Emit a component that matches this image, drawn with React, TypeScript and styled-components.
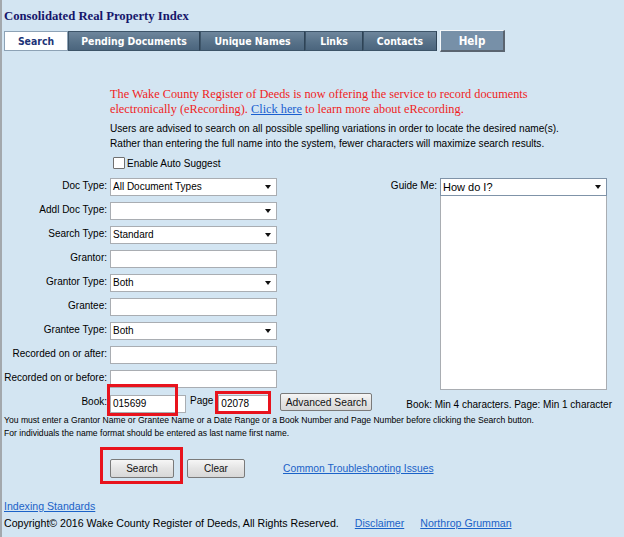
import styled, { createGlobalStyle } from "styled-components";

const GlobalStyle = createGlobalStyle`
  html, body {
    margin: 0;
    padding: 0;
    background: #d3e5f2;
  }
  body {
    font-family: "Liberation Sans", Arial, sans-serif;
    font-size: 10px;
    color: #000;
  }
`;

const Page = styled.div`
  width: 624px;
  height: 537px;
  box-sizing: border-box;
  border-left: 2px solid #a3a8ad;
  background: #d3e5f2;
  padding: 9px 0 0 2px;
  overflow: hidden;
`;

const Title = styled.h1`
  margin: 0;
  font-family: "Liberation Serif", "Times New Roman", serif;
  font-size: 12.7px;
  font-weight: bold;
  color: #16166b;
  line-height: 15px;
`;

const TabBar = styled.div`
  display: flex;
  align-items: flex-end;
  margin-top: 7px;
  height: 20px;
`;

const Tab = styled.div<{ $active?: boolean; $width: number }>`
  box-sizing: border-box;
  width: ${({ $width }) => $width}px;
  height: 20px;
  display: flex;
  align-items: center;
  justify-content: center;
  font-family: "DejaVu Sans Condensed", "DejaVu Sans", Verdana, sans-serif;
  font-stretch: semi-condensed;
  font-size: 10.4px;
  font-weight: bold;
  color: ${({ $active }) => ($active ? "#1d3477" : "#ffffff")};
  background: ${({ $active }) =>
    $active ? "#ffffff" : "linear-gradient(#6e869c, #587289 55%, #4b657d)"};
  border: 1px solid ${({ $active }) => ($active ? "#8da2b5" : "#3d5468")};
  border-right-color: ${({ $active }) => ($active ? "#8da2b5" : "#2e4356")};
`;

const HelpTab = styled.div`
  box-sizing: border-box;
  width: 65px;
  height: 22px;
  margin-left: 3px;
  display: flex;
  align-items: center;
  justify-content: center;
  font-family: "DejaVu Sans Condensed", "DejaVu Sans", Verdana, sans-serif;
  font-stretch: semi-condensed;
  font-size: 11.5px;
  font-weight: bold;
  color: #ffffff;
  background: #7790a8;
  border-top: 1px solid #f4f7fa;
  border-left: 1px solid #f4f7fa;
  border-right: 2px solid #5a6470;
  border-bottom: 2px solid #5a6470;
  position: relative;
  top: 1px;
`;

const Notice = styled.div`
  margin: 36px 0 0 106px;
  width: 440px;
`;

const RedText = styled.p`
  margin: 0;
  font-family: "Liberation Serif", "Times New Roman", serif;
  font-size: 12.3px;
  line-height: 15px;
  color: #f01e1e;

  a {
    color: #1a5fd0;
    text-decoration: underline;
  }
`;

const Advice = styled.p`
  margin: 4px 0 0;
  font-size: 10.1px;
  line-height: 15px;
  width: 520px;
`;

const CheckRow = styled.label`
  display: flex;
  align-items: center;
  gap: 2px;
  margin: 6px 0 0 109px;
  font-size: 10px;
  height: 12px;
`;

const Box = styled.span`
  display: inline-block;
  width: 10px;
  height: 10px;
  border: 1px solid #707070;
  background: #fff;
  border-radius: 1px;
`;

const FormArea = styled.div`
  display: flex;
  margin-top: 9px;
`;

const FieldGrid = styled.div`
  display: grid;
  grid-template-columns: 103px 167px;
  grid-auto-rows: 18px;
  column-gap: 3px;
  row-gap: 6px;
`;

const Label = styled.span`
  text-align: right;
  font-size: 10px;
  line-height: 12px;
  padding-top: 2px;
  white-space: nowrap;
`;

const Field = styled.div<{ $width?: number }>`
  box-sizing: border-box;
  position: relative;
  width: ${({ $width }) => ($width ? `${$width}px` : "100%")};
  height: 18px;
  background: #fff;
  border: 1px solid #a9adb2;
  font-size: 10px;
  line-height: 16px;
  padding-left: 2px;
`;

const Arrow = styled.span`
  position: absolute;
  right: 5px;
  top: 6px;
  width: 0;
  height: 0;
  border-left: 3.5px solid transparent;
  border-right: 3.5px solid transparent;
  border-top: 4px solid #111;
`;

const GuideColumn = styled.div`
  display: flex;
  margin-left: 113px;
  align-items: flex-start;
`;

const GuideLabel = styled.span`
  font-size: 10px;
  width: 47px;
  text-align: right;
  white-space: nowrap;
  padding-top: 2px;
  margin-right: 3px;
`;

const GuideStack = styled.div`
  display: flex;
  flex-direction: column;
  width: 167px;
`;

const GuideSelect = styled(Field)`
  font-size: 11px;
  border-color: #7f93a8;
`;

const ListBox = styled.div`
  height: 193px;
  background: #fff;
  border: 1px solid #a9adb2;
  border-top: none;
`;

const BookRow = styled.div`
  display: flex;
  align-items: flex-start;
  margin-top: 5px;
  height: 20px;
`;

const BookLabel = styled.span`
  width: 103px;
  text-align: right;
  font-size: 10px;
  margin: 1px 3px 0 0;
`;

const PageLabel = styled.span`
  font-size: 10px;
  margin: 0 5px 0 4px;
`;

const Marked = styled.div<{ $l: number; $t: number; $r: number; $b: number }>`
  position: relative;

  &::after {
    content: "";
    position: absolute;
    left: ${({ $l }) => -$l}px;
    top: ${({ $t }) => -$t}px;
    right: ${({ $r }) => -$r}px;
    bottom: ${({ $b }) => -$b}px;
    border: 3px solid #e8131d;
    pointer-events: none;
  }
`;

const Button = styled.button<{ $width: number }>`
  box-sizing: border-box;
  width: ${({ $width }) => $width}px;
  height: 19px;
  padding: 0;
  font-family: "Liberation Sans", Arial, sans-serif;
  font-size: 10px;
  color: #111;
  background: linear-gradient(#f6f6f6, #e4e4e4 50%, #d8d8d8);
  border: 1px solid #7a7a7a;
  border-radius: 2px;
`;

const AdvancedButton = styled(Button)`
  margin: -2px 0 0 10px;
  height: 18px;
  font-size: 10.3px;
`;

const MinText = styled.span`
  font-size: 10px;
  margin: 4px 0 0 34px;
  white-space: nowrap;
`;

const Fine = styled.div`
  margin: -1px 0 0 0;
  font-size: 8.6px;
  line-height: 13px;
`;

const ActionRow = styled.div`
  display: flex;
  align-items: center;
  margin: 19px 0 0 106px;
  gap: 13px;
`;

const Link = styled.a`
  color: #1a62c8;
  text-decoration: underline;
  font-size: 10.6px;
`;

const TroubleLink = styled(Link)`
  margin-left: 25px;
  font-size: 10.3px;
`;

const Footer = styled.div`
  margin: 22px 0 0 0;
  display: flex;
  flex-direction: column;
  align-items: flex-start;
  gap: 4px;
  font-size: 10.6px;
  line-height: 13px;
`;

const CopyRow = styled.div`
  display: flex;
  gap: 16px;
`;

const tabs = [
  { name: "Search", width: 64, active: true },
  { name: "Pending Documents", width: 132 },
  { name: "Unique Names", width: 105 },
  { name: "Links", width: 58 },
  { name: "Contacts", width: 74 },
];

const rows: { label: string; value?: string; select?: boolean }[] = [
  { label: "Doc Type:", value: "All Document Types", select: true },
  { label: "Addl Doc Type:", value: "", select: true },
  { label: "Search Type:", value: "Standard", select: true },
  { label: "Grantor:" },
  { label: "Grantor Type:", value: "Both", select: true },
  { label: "Grantee:" },
  { label: "Grantee Type:", value: "Both", select: true },
  { label: "Recorded on or after:" },
  { label: "Recorded on or before:" },
];

export default function App() {
  return (
    <>
      <GlobalStyle />
      <Page>
        <Title>Consolidated Real Property Index</Title>
        <TabBar>
          {tabs.map((t) => (
            <Tab key={t.name} $active={t.active} $width={t.width}>
              {t.name}
            </Tab>
          ))}
          <HelpTab>Help</HelpTab>
        </TabBar>

        <Notice>
          <RedText>
            The Wake County Register of Deeds is now offering the service to record documents
            electronically (eRecording). <a href="#">Click here</a> to learn more about
            eRecording.
          </RedText>
          <Advice>
            Users are advised to search on all possible spelling variations in order to locate the
            desired name(s).
            <br />
            Rather than entering the full name into the system, fewer characters will maximize
            search results.
          </Advice>
        </Notice>
        <CheckRow>
          <Box />
          Enable Auto Suggest
        </CheckRow>

        <FormArea>
          <FieldGrid>
            {rows.map((r) => [
              <Label key={r.label + "-l"}>{r.label}</Label>,
              <Field key={r.label + "-f"}>
                {r.value}
                {r.select && <Arrow />}
              </Field>,
            ])}
          </FieldGrid>
          <GuideColumn>
            <GuideLabel>Guide Me:</GuideLabel>
            <GuideStack>
              <GuideSelect>
                How do I?
                <Arrow />
              </GuideSelect>
              <ListBox />
            </GuideStack>
          </GuideColumn>
        </FormArea>

        <BookRow>
          <BookLabel>Book:</BookLabel>
          <Marked $l={3} $t={11} $r={-8} $b={3}>
            <Field $width={76}>015699</Field>
          </Marked>
          <PageLabel>Page</PageLabel>
          <Marked $l={3} $t={4} $r={1} $b={1}>
            <Field $width={52}>02078</Field>
          </Marked>
          <AdvancedButton $width={92}>Advanced Search</AdvancedButton>
          <MinText>Book: Min 4 characters. Page: Min 1 character</MinText>
        </BookRow>

        <Fine>
          You must enter a Grantor Name or Grantee Name or a Date Range or a Book Number and Page
          Number before clicking the Search button.
          <br />
          For individuals the name format should be entered as last name first name.
        </Fine>

        <ActionRow>
          <Marked $l={10} $t={12} $r={9} $b={6}>
            <Button $width={64}>Search</Button>
          </Marked>
          <Button $width={58}>Clear</Button>
          <TroubleLink href="#">Common Troubleshooting Issues</TroubleLink>
        </ActionRow>

        <Footer>
          <Link href="#">Indexing Standards</Link>
          <CopyRow>
            <span>Copyright© 2016 Wake County Register of Deeds, All Rights Reserved.</span>
            <Link href="#">Disclaimer</Link>
            <Link href="#">Northrop Grumman</Link>
          </CopyRow>
        </Footer>
      </Page>
    </>
  );
}
